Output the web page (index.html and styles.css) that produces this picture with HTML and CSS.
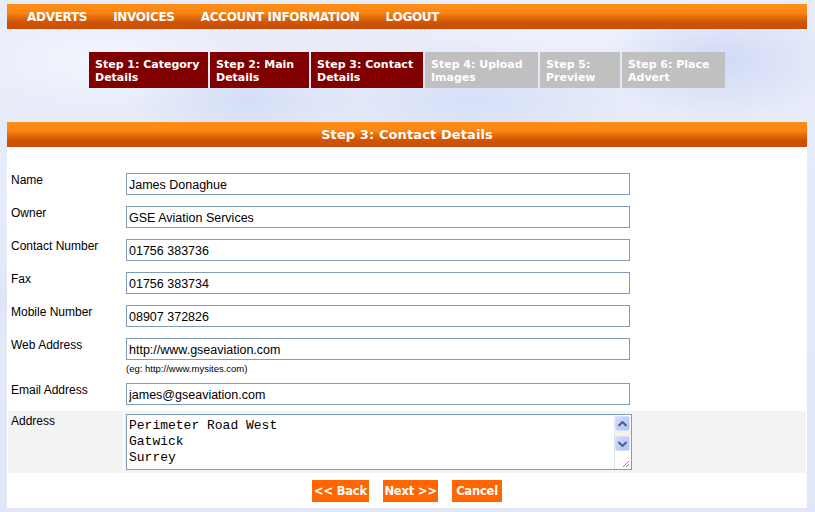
FILE: index.html
```html
<!DOCTYPE html>
<html lang="en">
<head>
<meta charset="utf-8">
<title>Place Advert - Step 3: Contact Details</title>
<link rel="stylesheet" href="styles.css">
</head>
<body>
<div class="page">
  <nav class="topnav">
    <a href="#">ADVERTS</a>
    <a href="#">INVOICES</a>
    <a href="#">ACCOUNT INFORMATION</a>
    <a href="#">LOGOUT</a>
  </nav>

  <div class="steps">
    <div class="step done w1">Step 1: Category<br>Details</div>
    <div class="step done w2">Step 2: Main<br>Details</div>
    <div class="step done w3">Step 3: Contact<br>Details</div>
    <div class="step todo w4">Step 4: Upload<br>Images</div>
    <div class="step todo w5">Step 5:<br>Preview</div>
    <div class="step todo w6">Step 6: Place<br>Advert</div>
  </div>

  <h1 class="section-head">Step 3: Contact Details</h1>

  <form class="panel">
    <div class="rows">
      <div class="row">
        <label class="lbl">Name</label>
        <div class="fld"><input class="txt" type="text" value="James Donaghue"></div>
      </div>
      <div class="row">
        <label class="lbl">Owner</label>
        <div class="fld"><input class="txt" type="text" value="GSE Aviation Services"></div>
      </div>
      <div class="row">
        <label class="lbl">Contact Number</label>
        <div class="fld"><input class="txt" type="text" value="01756 383736"></div>
      </div>
      <div class="row">
        <label class="lbl">Fax</label>
        <div class="fld"><input class="txt" type="text" value="01756 383734"></div>
      </div>
      <div class="row">
        <label class="lbl">Mobile Number</label>
        <div class="fld"><input class="txt" type="text" value="08907 372826"></div>
      </div>
      <div class="row row-web">
        <label class="lbl">Web Address</label>
        <div class="fld">
          <input class="txt" type="text" value="http://www.gseaviation.com">
          <div class="hint">(eg: http://www.mysites.com)</div>
        </div>
      </div>
      <div class="row row-email">
        <label class="lbl">Email Address</label>
        <div class="fld"><input class="txt" type="text" value="james@gseaviation.com"></div>
      </div>
      <div class="row row-address">
        <label class="lbl">Address</label>
        <div class="fld">
          <div class="area">
            <textarea class="area-text" spellcheck="false">Perimeter Road West
Gatwick
Surrey</textarea>
            <div class="sbar">
              <span class="sbtn"><svg width="9" height="6" viewBox="0 0 9 6"><path d="M0.5 5 L4.5 1 L8.5 5" fill="none" stroke="#4d6185" stroke-width="2"/></svg></span>
              <span class="strack"></span>
              <span class="sbtn"><svg width="9" height="6" viewBox="0 0 9 6"><path d="M0.5 1 L4.5 5 L8.5 1" fill="none" stroke="#4d6185" stroke-width="2"/></svg></span>
              <span class="sgrip"><svg width="8" height="8" viewBox="0 0 8 8"><path d="M7 1 L1 7 M7 4 L4 7" stroke="#8a8a8a" stroke-width="1"/></svg></span>
            </div>
          </div>
        </div>
      </div>
    </div>

    <div class="actions">
      <button type="button" class="btn btn-back">&lt;&lt; Back</button>
      <button type="button" class="btn btn-next">Next &gt;&gt;</button>
      <button type="button" class="btn btn-cancel">Cancel</button>
    </div>
  </form>
</div>
</body>
</html>
```

FILE: styles.css
```css
html, body {
  margin: 0;
  padding: 0;
}

body {
  height: 512px;
  overflow: hidden;
  background-color: #e4e9f9;
  background-image:
    radial-gradient(ellipse 90px 60px at 70px 300px, rgba(205, 216, 246, 0.9), rgba(205, 216, 246, 0)),
    radial-gradient(ellipse 120px 50px at 250px 100px, rgba(210, 220, 246, 0.9), rgba(210, 220, 246, 0)),
    radial-gradient(ellipse 160px 60px at 470px 100px, rgba(212, 222, 248, 0.9), rgba(212, 222, 248, 0)),
    radial-gradient(ellipse 120px 60px at 720px 60px, rgba(206, 216, 246, 0.9), rgba(206, 216, 246, 0)),
    radial-gradient(ellipse 140px 50px at 100px 60px, rgba(244, 246, 253, 0.9), rgba(244, 246, 253, 0)),
    radial-gradient(ellipse 200px 60px at 600px 20px, rgba(240, 243, 252, 0.9), rgba(240, 243, 252, 0)),
    linear-gradient(#e9edfa, #e2e7f8);
}

.page {
  width: 800px;
  padding: 4px 8px 0 7px;
}

/* ---------- top navigation ---------- */
.topnav {
  display: flex;
  height: 25px;
  padding-left: 7px;
  background: linear-gradient(#ff8f16 0%, #fb8512 35%, #e06a0a 55%, #d05306 75%, #c94c04 100%);
}

.topnav a {
  padding: 0 13px;
  line-height: 26px;
  color: #ffffff;
  text-decoration: none;
  font-family: "DejaVu Sans", Verdana, sans-serif;
  font-weight: bold;
  font-size: 12px;
  letter-spacing: -0.3px;
}

/* ---------- step tabs ---------- */
.steps {
  display: flex;
  justify-content: center;
  gap: 2px;
  margin-top: 23px;
}

.step {
  box-sizing: border-box;
  height: 36px;
  padding: 6px 0 0 6px;
  font-family: "DejaVu Sans", Verdana, sans-serif;
  font-weight: bold;
  font-size: 11px;
  line-height: 13px;
  color: #ffffff;
}

.step.done { background: #800000; }
.step.todo { background: #c0c0c0; }

.w1 { width: 119px; }
.w2 { width: 99px; }
.w3 { width: 112px; }
.w4 { width: 113px; }
.w5 { width: 80px; }
.w6 { width: 103px; }

/* ---------- section header ---------- */
.section-head {
  margin: 34px 0 0;
  height: 25px;
  line-height: 26px;
  text-align: center;
  color: #ffffff;
  font-family: "DejaVu Sans", Verdana, sans-serif;
  font-weight: bold;
  font-size: 13px;
  letter-spacing: 0.1px;
  background: linear-gradient(#ff8f16 0%, #fb8512 35%, #e06a0a 55%, #d05306 75%, #c94c04 100%);
}

/* ---------- form panel ---------- */
.panel {
  margin: 0;
  background: #ffffff;
  padding: 23px 1px 6px;
}

.rows {
  display: flex;
  flex-direction: column;
  gap: 1px;
}

.row {
  display: grid;
  grid-template-columns: 115px 1fr;
  column-gap: 1px;
  height: 32px;
}

.row-web { height: 44px; }
.row-email { height: 30px; }
.row-address { height: 62px; }

.row-address .lbl,
.row-address .fld {
  background: #f3f3f3;
}

.lbl {
  padding: 3px 0 0 3px;
  font-family: "Liberation Sans", Arial, sans-serif;
  font-size: 12px;
  line-height: 15px;
  color: #000000;
}

.fld {
  padding: 3px 0 0 2px;
}

.txt {
  display: block;
  box-sizing: border-box;
  width: 504px;
  height: 22px;
  margin: 0;
  padding: 2px 2px 0;
  border: 1px solid #7f9db9;
  background: #ffffff;
  font-family: "Liberation Sans", Arial, sans-serif;
  font-size: 12.5px;
  color: #000000;
  outline: none;
}

.hint {
  margin-top: 3px;
  font-family: "Liberation Sans", Arial, sans-serif;
  font-size: 9.5px;
  line-height: 12px;
  color: #000000;
}

/* ---------- address textarea ---------- */
.area {
  display: flex;
  box-sizing: border-box;
  width: 506px;
  height: 56px;
  border: 1px solid #7f9db9;
  background: #ffffff;
}

.area-text {
  flex: 1;
  margin: 0;
  padding: 3px 2px 0;
  border: 0;
  resize: none;
  overflow: hidden;
  outline: none;
  background: #ffffff;
  font-family: "Liberation Mono", "Courier New", monospace;
  font-size: 13px;
  line-height: 16px;
  color: #000000;
}

.sbar {
  display: flex;
  flex-direction: column;
  width: 16px;
  border-left: 1px solid #e3e3e3;
  padding: 1px 0 0 0;
  background: #ffffff;
}

.sbtn {
  display: flex;
  align-items: center;
  justify-content: center;
  box-sizing: border-box;
  width: 15px;
  height: 15px;
  border: 1px solid #d6e1fb;
  border-radius: 2px;
  background: linear-gradient(135deg, #cfdcfd 0%, #bccdf8 60%, #b0c3f3 100%);
}

.strack {
  height: 5px;
  background: #f4f2e8;
}

.sgrip {
  display: flex;
  flex: 1;
  align-items: flex-end;
  justify-content: flex-end;
  padding: 0 1px 1px 0;
}

/* ---------- buttons ---------- */
.actions {
  display: flex;
  justify-content: center;
  gap: 14px;
  margin-top: 7px;
}

.btn {
  height: 22px;
  margin: 0;
  padding: 0;
  border: 0;
  background: #ff6600;
  color: #ffffff;
  font-family: "DejaVu Sans", Verdana, sans-serif;
  font-weight: bold;
  font-size: 11.5px;
  letter-spacing: -0.2px;
  white-space: nowrap;
  cursor: pointer;
}

.btn-back { width: 57px; }
.btn-next { width: 55px; }
.btn-cancel { width: 50px; }
```
